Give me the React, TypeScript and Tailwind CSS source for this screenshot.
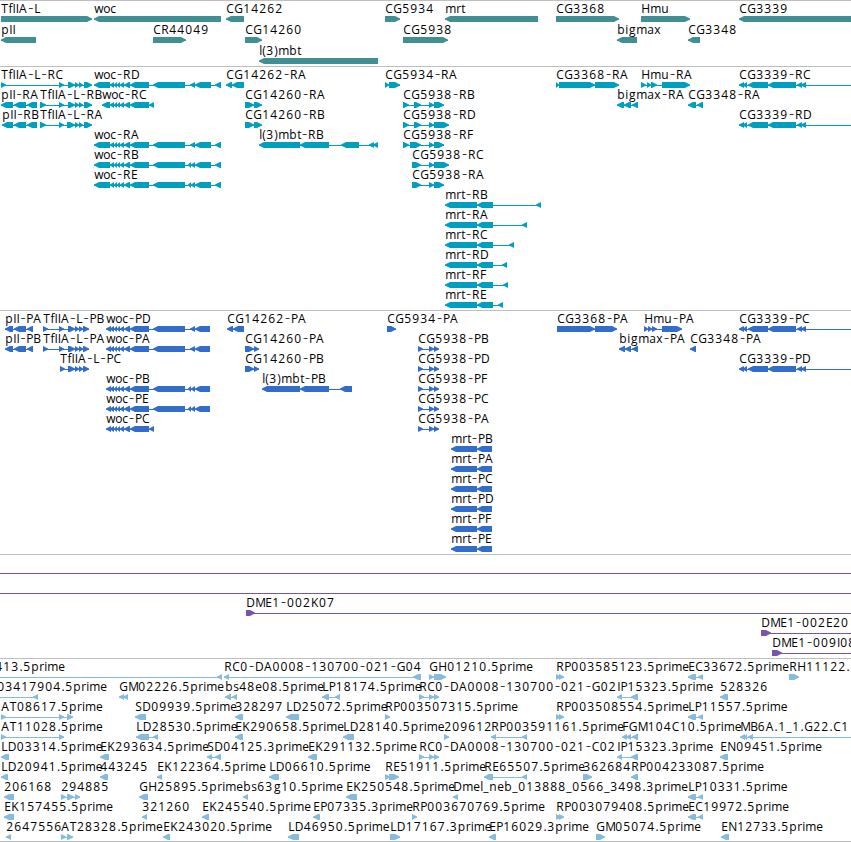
import * as React from 'react'

type Span = [number, number]

interface Feature {
  label?: string
  row: number
  dir: 'l' | 'r'
  spans: Span[]
  /** start and end of the connecting line, when it runs past the blocks */
  line?: Span
  labelX?: number
}

interface TrackProps {
  features: Feature[]
  color: string
  height: number
  pitch?: number
}

const VIEW_WIDTH = 851
const HEAD = 5

const ADVANCE: Record<string, number> = {
  A: 8.5, B: 7.5, C: 8, D: 9, E: 7, F: 6.5, G: 9, H: 9, I: 3.2, K: 8, L: 6.5, M: 10,
  N: 9, P: 7, R: 8, S: 7, T: 7.4, a: 7, b: 8, c: 6, e: 7, f: 4, g: 8, i: 3, l: 3,
  m: 11, n: 8, o: 7, p: 8, r: 5, s: 6, t: 4, u: 8, w: 9, x: 7, '-': 6.75, '.': 4,
  _: 6, '(': 4, ')': 4,
}

/** Shift of a narrow glyph inside its cell */
const NUDGE: Record<string, number> = { '-': 0.8, g: 0.7, '.': 0.4 }

function charPositions(text: string, start: number): string {
  let x = start
  return text
    .split('')
    .map((ch) => {
      const pos = x + (NUDGE[ch] ?? 0)
      x += ADVANCE[ch] ?? 8
      return pos.toFixed(2)
    })
    .join(' ')
}

function blockPoints([a, b]: Span, dir: 'l' | 'r', top: number): string {
  const head = Math.min(HEAD, b - a)
  const mid = top + 3
  const bottom = top + 6
  if (dir === 'r') {
    return `${a},${top} ${b - head},${top} ${b},${mid - 0.5} ${b},${mid + 0.5} ${b - head},${bottom} ${a},${bottom}`
  }
  return `${b},${top} ${a + head},${top} ${a},${mid - 0.5} ${a},${mid + 0.5} ${a + head},${bottom} ${b},${bottom}`
}

function FeatureGlyph({ feature, pitch }: { feature: Feature; pitch: number }) {
  const { label, row, dir, spans } = feature
  const top = 15 + row * pitch
  const from = feature.line?.[0] ?? spans[0][0]
  const to = feature.line?.[1] ?? spans[spans.length - 1][1]

  return (
    <g>
      <rect x={from} y={top + 3} width={to - from} height={1} />
      {spans.map((span) => (
        <polygon key={span[0]} points={blockPoints(span, dir, top)} />
      ))}
      {label && (
        <text
          x={charPositions(label, (feature.labelX ?? spans[0][0]) + 0.2)}
          y={12 + row * pitch}
          fill="#000"
        >
          {label.split(/(-)/).map((part, i) =>
            part === '-' ? (
              <tspan key={i} className="text-[16px] font-light">
                -
              </tspan>
            ) : (
              part
            )
          )}
        </text>
      )}
    </g>
  )
}

function Track({ features, color, height, pitch = 20 }: TrackProps) {
  return (
    <section className="border-t border-[#bfbfbf]">
      <svg
        width={VIEW_WIDTH}
        height={height}
        fill={color}
        className="block overflow-visible font-['Open_Sans','Noto_Sans',sans-serif] text-[12px]"
      >
        {features.map((feature, i) => (
          <FeatureGlyph key={i} feature={feature} pitch={pitch} />
        ))}
      </svg>
    </section>
  )
}

const f = (
  label: string,
  row: number,
  dir: 'l' | 'r',
  spans: Span[],
  extra: Partial<Feature> = {}
): Feature => ({ label, row, dir, spans, ...extra })

/* Exon groups shared between isoforms */
const WOC_SMALL: Span[] = [[110, 114], [114, 117], [117, 120], [120, 124], [124, 130], [130, 149]]
const WOC_FULL: Span[] = [[94, 110], ...WOC_SMALL, [153, 185], [190, 195], [195, 211], [215, 221]]
const WOC_CDS: Span[] = [[106, 111], ...WOC_SMALL, [153, 185], [190, 195], [195, 210]]
const WOC_CDS_B: Span[] = [[106, 111], ...WOC_SMALL, [153, 185], [188, 191], [191, 195], [195, 210]]
const WOC_FULL_B: Span[] = [[94, 110], ...WOC_SMALL, [153, 185], [188, 191], [191, 195], [195, 211], [215, 221]]
const TF_TAIL: Span[] = [[68, 75], [75, 79], [79, 83], [84, 92]]
const TF_CDS: Span[] = [[68, 75], [75, 79], [79, 83], [83, 89]]
const CG3339: Span[] = [[739, 744], [743, 747], [748, 768], [768, 796], [797, 802], [801, 806]]
const toEdge: Partial<Feature> = { line: [739, VIEW_WIDTH] }

const genes: Feature[] = [
  f('TfIIA-L', 0, 'r', [[1, 92]]),
  f('woc', 0, 'l', [[94, 221]]),
  f('CG14262', 0, 'l', [[226, 244]]),
  f('CG5934', 0, 'r', [[385, 400]]),
  f('mrt', 0, 'l', [[445, 538]]),
  f('CG3368', 0, 'r', [[556, 619]]),
  f('Hmu', 0, 'r', [[641, 690]]),
  f('CG3339', 0, 'l', [[739, 851]]),
  f('pII', 1, 'l', [[1, 36]]),
  f('CR44049', 1, 'r', [[153, 186]]),
  f('CG14260', 1, 'r', [[245, 262]]),
  f('CG5938', 1, 'r', [[403, 448]]),
  f('bigmax', 1, 'l', [[617, 637]]),
  f('CG3348', 1, 'l', [[688, 700]]),
  f('l(3)mbt', 2, 'l', [[259, 378]]),
]

const transcripts: Feature[] = [
  f('TfIIA-L-RC', 0, 'r', [[1, 6], [59, 64], ...TF_TAIL]),
  f('woc-RD', 0, 'l', WOC_FULL),
  f('CG14262-RA', 0, 'l', [[226, 232], [232, 244]]),
  f('CG5934-RA', 0, 'r', [[385, 389], [389, 400]]),
  f('CG3368-RA', 0, 'r', [[556, 559], [559, 595], [595, 619]]),
  f('Hmu-RA', 0, 'r', [[641, 646], [647, 651], [651, 657], [662, 690]]),
  f('CG3339-RC', 0, 'l', CG3339, toEdge),
  f('pII-RA', 1, 'l', [[1, 13], [14, 26], [27, 37]]),
  f('TfIIA-L-RB', 1, 'r', [[40, 46], [59, 64], ...TF_TAIL]),
  f('woc-RC', 1, 'l', [[102, 110], ...WOC_SMALL, [149, 154]]),
  f('CG14260-RA', 1, 'r', [[245, 254], [254, 262]]),
  f('CG5938-RB', 1, 'r', [[403, 409], [414, 421], [429, 434], [434, 444]]),
  f('bigmax-RA', 1, 'l', [[617, 624], [624, 631], [632, 638]]),
  f('CG3348-RA', 1, 'l', [[688, 696], [697, 703]]),
  f('pII-RB', 2, 'l', [[2, 13], [14, 26], [27, 37]]),
  f('TfIIA-L-RA', 2, 'r', [[40, 46], [59, 64], [67, 75], [75, 79], [79, 83], [84, 92]]),
  f('CG14260-RB', 2, 'r', [[245, 254], [254, 262]]),
  f('CG5938-RD', 2, 'r', [[403, 409], [414, 421], [429, 434], [434, 449]]),
  f('CG3339-RD', 2, 'l', CG3339, toEdge),
  f('woc-RA', 3, 'l', WOC_FULL),
  f('l(3)mbt-RB', 3, 'l', [[259, 300], [300, 329], [341, 359], [369, 374], [373, 378]]),
  f('CG5938-RF', 3, 'r', [[403, 409], [410, 421], [429, 434], [434, 444]]),
  f('woc-RB', 4, 'l', WOC_FULL_B),
  f('CG5938-RC', 4, 'r', [[412, 421], [429, 434], [434, 449]]),
  f('woc-RE', 5, 'l', WOC_FULL_B),
  f('CG5938-RA', 5, 'r', [[412, 421], [429, 434], [434, 444]]),
  f('mrt-RB', 6, 'l', [[445, 477], [477, 493], [536, 541]]),
  f('mrt-RA', 7, 'l', [[445, 477], [477, 493], [522, 527]]),
  f('mrt-RC', 8, 'l', [[445, 477], [477, 493], [509, 514]]),
  f('mrt-RD', 9, 'l', [[445, 477], [477, 493], [502, 507]]),
  f('mrt-RF', 10, 'l', [[445, 477], [477, 493], [503, 508]]),
  f('mrt-RE', 11, 'l', [[445, 477], [477, 493], [498, 503]]),
]

const CG5938_CDS: Span[] = [[418, 423], [429, 434], [434, 439]]
const MRT_CDS: Span[] = [[451, 477], [477, 492]]

const proteins: Feature[] = [
  f('pII-PA', 0, 'l', [[5, 13], [14, 26], [27, 33]]),
  f('TfIIA-L-PB', 0, 'r', [[43, 48], [59, 64], ...TF_CDS]),
  f('woc-PD', 0, 'l', WOC_CDS),
  f('CG14262-PA', 0, 'l', [[227, 233], [233, 244]]),
  f('CG5934-PA', 0, 'r', [[387, 396]]),
  f('CG3368-PA', 0, 'r', [[557, 595], [595, 617]]),
  f('Hmu-PA', 0, 'r', [[644, 648], [648, 652], [652, 657], [662, 682]]),
  f('CG3339-PC', 0, 'l', CG3339, toEdge),
  f('pII-PB', 1, 'l', [[5, 13], [14, 26], [27, 33]]),
  f('TfIIA-L-PA', 1, 'r', [[43, 48], [59, 64], ...TF_CDS]),
  f('woc-PA', 1, 'l', WOC_CDS),
  f('CG14260-PA', 1, 'r', [[245, 254], [254, 259]]),
  f('CG5938-PB', 1, 'r', CG5938_CDS),
  f('bigmax-PA', 1, 'l', [[619, 625], [625, 631], [632, 638]]),
  f('CG3348-PA', 1, 'l', [[690, 696]]),
  f('TfIIA-L-PC', 2, 'r', [[60, 65], ...TF_CDS]),
  f('CG14260-PB', 2, 'r', [[245, 254], [254, 259]]),
  f('CG5938-PD', 2, 'r', CG5938_CDS),
  f('CG3339-PD', 2, 'l', CG3339, toEdge),
  f('woc-PB', 3, 'l', WOC_CDS_B),
  f('l(3)mbt-PB', 3, 'l', [[262, 300], [300, 329], [340, 352]]),
  f('CG5938-PF', 3, 'r', CG5938_CDS),
  f('woc-PE', 4, 'l', WOC_CDS_B),
  f('CG5938-PC', 4, 'r', CG5938_CDS),
  f('woc-PC', 5, 'l', [[106, 111], ...WOC_SMALL, [149, 154]]),
  f('CG5938-PA', 5, 'r', CG5938_CDS),
  f('mrt-PB', 6, 'l', MRT_CDS),
  f('mrt-PA', 7, 'l', MRT_CDS),
  f('mrt-PC', 8, 'l', MRT_CDS),
  f('mrt-PD', 9, 'l', MRT_CDS),
  f('mrt-PF', 10, 'l', MRT_CDS),
  f('mrt-PE', 11, 'l', MRT_CDS),
]

const bacs: Feature[] = [
  { row: 0, dir: 'r', spans: [], line: [0, VIEW_WIDTH] },
  { row: 1, dir: 'r', spans: [], line: [0, VIEW_WIDTH] },
  f('DME1-002K07', 2, 'r', [[246, 255]], { line: [246, VIEW_WIDTH] }),
  f('DME1-002E20', 3, 'r', [[761, 771]], { line: [761, VIEW_WIDTH] }),
  f('DME1-009I08', 4, 'r', [[772, 782]], { line: [772, VIEW_WIDTH] }),
]

const ests: Feature[] = [
  f('413.5prime', 0, 'l', [[217, 222]], { labelX: -5, line: [0, 222] }),
  f('RC0-DA0008-130700-021-G04', 0, 'l', [[224, 229], [413, 421]]),
  f('GH01210.5prime', 0, 'r', [[429, 434], [434, 446]]),
  f('RP003585123.5prime', 0, 'r', [[556, 561], [559, 564]]),
  f('EC33672.5prime', 0, 'l', [[688, 696], [698, 703]]),
  f('RH11122.', 0, 'r', [[789, 799]]),

  f('03417904.5prime', 1, 'l', [[33, 38]], { labelX: -3, line: [0, 38] }),
  f('GM02226.5prime', 1, 'l', [[119, 124], [123, 128]]),
  f('bs48e08.5prime', 1, 'l', [[225, 231], [232, 237]]),
  f('LP18174.5prime', 1, 'l', [[322, 329], [335, 340]]),
  f('RC0-DA0008-130700-021-G02', 1, 'r', [[419, 424], [429, 434], [434, 439]]),
  f('IP15323.5prime', 1, 'l', [[617, 622], [631, 638]]),
  f('528326', 1, 'l', [[720, 728]]),

  f('AT08617.5prime', 2, 'r', [[1, 6], [59, 64], [67, 73]]),
  f('SD09939.5prime', 2, 'l', [[135, 146]]),
  f('328297', 2, 'l', [[235, 243]]),
  f('LD25072.5prime', 2, 'l', [[286, 299]]),
  f('RP003507315.5prime', 2, 'r', [[385, 390]]),
  f('RP003508554.5prime', 2, 'r', [[556, 561], [559, 564]]),
  f('LP11557.5prime', 2, 'l', [[688, 696], [698, 703]]),

  f('AT11028.5prime', 3, 'r', [[1, 6], [59, 64]]),
  f('LD28530.5prime', 3, 'l', [[136, 149], [153, 158]]),
  f('EK290658.5prime', 3, 'l', [[235, 243]]),
  f('LD28140.5prime', 3, 'l', [[343, 354]]),
  f('209612', 3, 'r', [[444, 449]]),
  f('RP003591161.5prime', 3, 'l', [[491, 496], [522, 527]]),
  f('FGM104C10.5prime', 3, 'l', [[622, 627], [626, 631], [632, 638]]),
  f('MB6A.1_1.G22.C1', 3, 'l', [[740, 745], [744, 747], [748, 753]], { line: [740, VIEW_WIDTH] }),

  f('LD03314.5prime', 4, 'l', [[1, 9]]),
  f('EK293634.5prime', 4, 'l', [[100, 109]]),
  f('SD04125.3prime', 4, 'l', [[207, 212], [215, 221]]),
  f('EK291132.5prime', 4, 'l', [[308, 317]]),
  f('RC0-DA0008-130700-021-C02', 4, 'r', [[419, 424], [429, 434], [434, 439]]),
  f('IP15323.3prime', 4, 'l', [[617, 622], [631, 638]]),
  f('EN09451.5prime', 4, 'l', [[720, 728]]),

  f('LD20941.5prime', 5, 'l', [[1, 8]]),
  f('443245', 5, 'l', [[100, 108]]),
  f('EK122364.5prime', 5, 'l', [[157, 162]]),
  f('LD06610.5prime', 5, 'l', [[269, 279]]),
  f('RE51911.5prime', 5, 'r', [[385, 390], [389, 399]]),
  f('RE65507.5prime', 5, 'l', [[484, 493], [522, 527]]),
  f('362684', 5, 'r', [[583, 592]]),
  f('RP004233087.5prime', 5, 'l', [[631, 638]]),

  f('206168', 6, 'l', [[4, 14]]),
  f('294885', 6, 'r', [[61, 66], [67, 74], [75, 80]]),
  f('GH25895.5prime', 6, 'l', [[139, 148]]),
  f('bs63g10.5prime', 6, 'l', [[243, 248]]),
  f('EK250548.5prime', 6, 'l', [[346, 357]]),
  f('Dmel_neb_013888_0566_3498.3prime', 6, 'l', [[453, 458]]),
  f('LP10331.5prime', 6, 'l', [[688, 696], [698, 703]]),

  f('EK157455.5prime', 7, 'l', [[4, 14]]),
  f('321260', 7, 'l', [[142, 147]]),
  f('EK245540.5prime', 7, 'l', [[202, 209]]),
  f('EP07335.3prime', 7, 'l', [[313, 320]]),
  f('RP003670769.5prime', 7, 'r', [[412, 417]]),
  f('RP003079408.5prime', 7, 'r', [[556, 561], [559, 564]]),
  f('EC19972.5prime', 7, 'l', [[688, 696], [698, 703]]),

  f('2647556', 8, 'l', [[6, 11]]),
  f('AT28328.5prime', 8, 'r', [[61, 66], [67, 73]]),
  f('EK243020.5prime', 8, 'l', [[163, 170]]),
  f('LD46950.5prime', 8, 'l', [[288, 299]]),
  f('LD17167.3prime', 8, 'r', [[390, 400]]),
  f('EP16029.3prime', 8, 'l', [[489, 496]]),
  f('GM05074.5prime', 8, 'r', [[596, 605]]),
  f('EN12733.5prime', 8, 'l', [[721, 729]]),
]

export default function App() {
  return (
    <main className="flex h-[842px] w-[851px] flex-col overflow-hidden border-b border-[#bfbfbf] bg-white">
      <Track features={genes} color="#3f8f94" height={65} pitch={21} />
      <Track features={transcripts} color="#009fc0" height={243} />
      <Track features={proteins} color="#326dcc" height={243} />
      <Track features={bacs} color="#7755a8" height={103} />
      <Track features={ests} color="#87bbdd" height={182} />
    </main>
  )
}
